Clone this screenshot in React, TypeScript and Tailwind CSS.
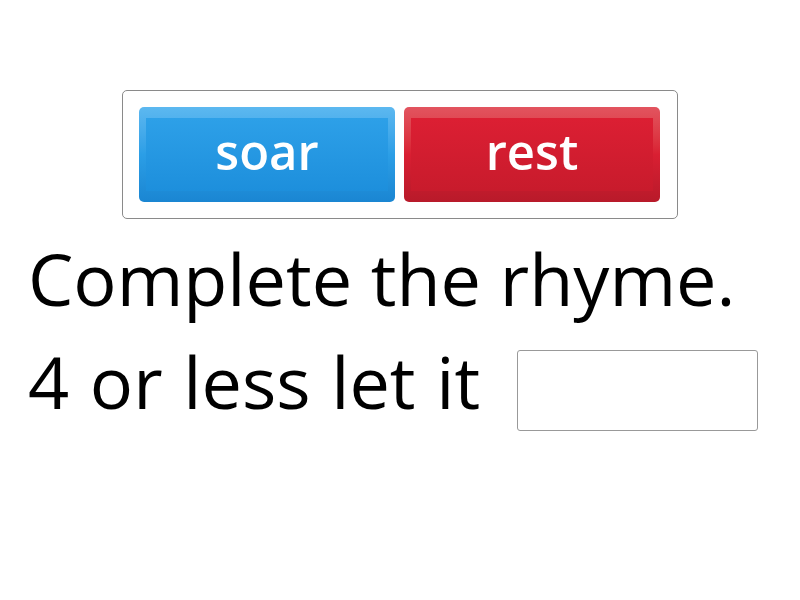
export default function App() {
  const font = { fontFamily: '"Open Sans", sans-serif' };
  return (
    <div className="w-[800px] h-[600px] bg-white relative overflow-hidden" style={font}>
      {/* answer tiles */}
      <div className="pt-[90px] flex justify-center">
        <div className="w-[556px] h-[129px] border border-[#8a8a8a] rounded-[5px] p-4 flex gap-[9px]">
          <Tile label="soar" color="blue" />
          <Tile label="rest" color="red" />
        </div>
      </div>

      {/* question */}
      <div className="pl-[28px] text-black font-normal text-[72px] leading-[103px] mt-[8px]">
        <div>Complete the rhyme.</div>
        <div className="flex items-center">
          <span className="[word-spacing:2px]">4 or less let it</span>
          <div className="ml-[37px] mt-[18px] w-[241px] h-[81px] border border-[#999] rounded-[3px] bg-white" />
        </div>
      </div>
    </div>
  );
}

function Tile({ label, color }: { label: string; color: "blue" | "red" }) {
  const outer =
    color === "blue"
      ? "bg-gradient-to-b from-[#5cb8f0] via-[#2b9ee6] to-[#1a86d2]"
      : "bg-gradient-to-b from-[#e2545f] via-[#d91f32] to-[#b81a2a]";
  const face =
    color === "blue"
      ? "bg-gradient-to-b from-[#2da0e8] to-[#1d8fdc]"
      : "bg-gradient-to-b from-[#dc1f33] to-[#c81b2c]";
  return (
    <div className={`w-[256px] h-[95px] rounded-[5px] px-[7px] pt-[11px] pb-[11px] ${outer}`}>
      <div className={`w-full h-full flex items-center justify-center ${face}`}>
        <span className="text-white font-semibold text-[49px] leading-none -mt-[6px]">{label}</span>
      </div>
    </div>
  );
}
